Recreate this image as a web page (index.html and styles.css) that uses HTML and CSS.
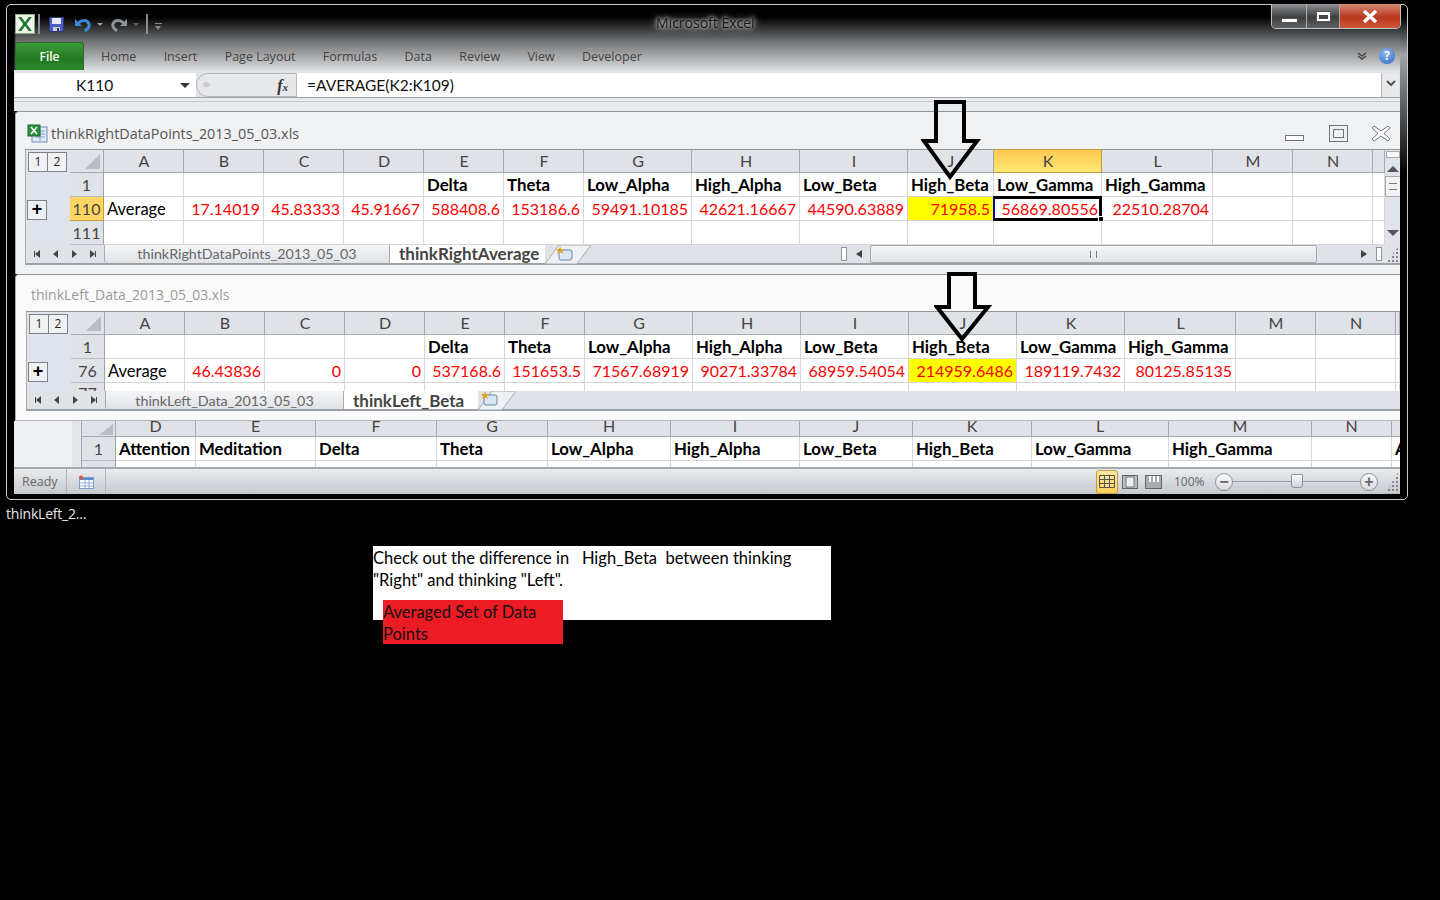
FILE: index.html
```html
<!DOCTYPE html>
<html>
  <head>
    <meta charset="UTF-8">
    <title>Microsoft Excel</title>
    <link rel="stylesheet" href="styles.css">
  </head>
  <body>
  <div class="win">
    <div class="titlebar">
      <div class="qat">
        <svg class="xl" width="20" height="20" viewBox="0 0 20 20"><rect x="0.5" y="0.5" width="19" height="19" fill="#eaf3e6" stroke="#8fa98a"/><path d="M3 3h14v14H3z" fill="#fff"/><path d="M3 3h3.5l3.5 5 3.5-5H17l-5.200 7 5.200 7h-3.500L10 12l-3.500 5H3l5.200-7z" fill="#1f7a2e"/></svg>
        <i class="qsep"></i>
        <svg class="save" width="15" height="15" viewBox="0 0 15 15"><rect x="0.500" y="0.500" width="14" height="14" fill="#4a5fc0" stroke="#2c3a86"/><rect x="3" y="1" width="9" height="6" fill="#e8ecf8"/><rect x="4" y="10" width="7" height="4" fill="#c9d0dc"/><rect x="8" y="11" width="2" height="3" fill="#334"/></svg>
        <svg class="undo" width="16" height="15" viewBox="0 0 16 15"><path d="M3 7c2-4 9-5 11 0 1 3-1 5-4 7" fill="none" stroke="#3f86d8" stroke-width="3"/><path d="M0 2v7h7z" fill="#3f86d8"/></svg>
        <span class="caret"></span>
        <svg class="redo" width="16" height="15" viewBox="0 0 16 15"><path d="M13 7C11 3 4 2 2 7c-1 3 1 5 4 7" fill="none" stroke="#8d9296" stroke-width="3"/><path d="M16 2v7H9z" fill="#8d9296"/></svg>
        <span class="caret dim"></span>
        <i class="qsep"></i>
        <span class="custom"></span>
      </div>
      <div class="apptitle">Microsoft Excel</div>
      <div class="winbtns">
        <span class="wb wmin"><i></i></span>
        <span class="wb wmax"><i></i></span>
        <span class="wb wclose">
          <svg width="16" height="13" viewBox="0 0 16 13"><path d="M2 1l12 11M14 1L2 12" stroke="#fff" stroke-width="3.500"/></svg>
        </span>
      </div>
    </div>

    <div class="ribbon">
      <span class="filetab">File</span>
      <span class="rtab t1">Home</span>
      <span class="rtab">Insert</span>
      <span class="rtab">Page Layout</span>
      <span class="rtab">Formulas</span>
      <span class="rtab">Data</span>
      <span class="rtab">Review</span>
      <span class="rtab">View</span>
      <span class="rtab">Developer</span>
      <span class="spacer"></span>
      <svg class="minim" width="10" height="8" viewBox="0 0 10 8"><path d="M1 1l4 3 4-3M1 4l4 3 4-3" fill="none" stroke="#444" stroke-width="1.500"/></svg>
      <span class="help">?</span>
    </div>

    <div class="formula">
      <div class="namebox">K110<span class="ddarrow"></span></div>
      <div class="fxbox"><span class="knob"></span><em>f<small>x</small></em></div>
      <div class="finput">=AVERAGE(K2:K109)</div>
      <div class="fexpand"><svg width="10" height="8" viewBox="0 0 10 8"><path d="M1 1l4 4 4-4" fill="none" stroke="#555" stroke-width="2"/></svg></div>
    </div>
    <div class="strip"></div>

    <div class="mdi first">
      <div class="mdititle">
        <svg width="21" height="19" viewBox="0 0 21 19"><rect x="5" y="3" width="15" height="15" fill="#dfe8f6" stroke="#6d8fc0"/><path d="M8 7h10M8 10h10M8 13h10M13 4v13" stroke="#88a4cc"/><rect x="1" y="1" width="12" height="11" fill="#2f8f3c" stroke="#1d6a2a"/><path d="M4 3l6 7M10 3l-6 7" stroke="#fff" stroke-width="1.500"/></svg>
        <span class="dname">thinkRightDataPoints_2013_05_03.xls</span>
        <span class="spacer"></span>
        <span class="mbtn mmin"></span>
        <span class="mbtn mmax"><i></i></span>
        <svg class="mclose" width="20" height="17" viewBox="0 0 20 17"><path d="M3 1l7 5 7-5 2 2-6 5.500 6 5.500-2 2-7-5-7 5-2-2 6-5.500L1 3z" fill="#fff" stroke="#6d747c"/></svg>
      </div>
      <div class="sheet">
        <div class="sheetmain">
          <div class="outline">
            <div class="levels"><span>1</span><span>2</span></div>
            <span class="plus">+</span>
          </div>
          <table class="grid g1">
            <colgroup>
              <col class="rh"><col class="c80"><col class="c80"><col class="c80"><col class="c80"><col class="c80"><col class="c80">
              <col class="c108"><col class="c108"><col class="c108"><col class="c86"><col class="c108"><col class="c111"><col class="c80"><col class="c80"><col class="c12">
            </colgroup>
            <tr class="hd">
              <th class="corner"><i></i></th><th>A</th><th>B</th><th>C</th><th>D</th><th>E</th><th>F</th><th>G</th><th>H</th><th>I</th><th>J</th><th class="sel">K</th><th>L</th><th>M</th><th>N</th><th></th>
            </tr>
            <tr>
              <th class="rn">1</th><td></td><td></td><td></td><td></td><td class="b">Delta</td><td class="b">Theta</td><td class="b">Low_Alpha</td><td class="b">High_Alpha</td><td class="b">Low_Beta</td><td class="b">High_Beta</td><td class="b">Low_Gamma</td><td class="b">High_Gamma</td><td></td><td></td><td></td>
            </tr>
            <tr>
              <th class="rn sel">110</th><td class="t">Average</td><td class="n">17.14019</td><td class="n">45.83333</td><td class="n">45.91667</td><td class="n">588408.6</td><td class="n">153186.6</td><td class="n">59491.10185</td><td class="n">42621.16667</td><td class="n">44590.63889</td><td class="n hi">71958.5</td><td class="n active">56869.80556</td><td class="n">22510.28704</td><td></td><td></td><td></td>
            </tr>
            <tr>
              <th class="rn">111</th><td></td><td></td><td></td><td></td><td></td><td></td><td></td><td></td><td></td><td></td><td></td><td></td><td></td><td></td><td></td>
            </tr>
          </table>
          <div class="vscroll">
            <span class="vsplit"></span>
            <span class="up"></span>
            <span class="vthumb"><i></i></span>
            <span class="spacer"></span>
            <span class="down"></span>
          </div>
        </div>
        <div class="tabbar">
          <div class="nav"><b class="first"></b><b class="prev"></b><b class="next"></b><b class="last"></b></div>
          <span class="stab w1">thinkRightDataPoints_2013_05_03</span>
          <span class="stab on w2">thinkRightAverage</span>
          <svg class="newtab" width="46" height="20" viewBox="0 0 46 20"><path d="M0 19L14 0h32L32 19z" fill="#eef0f3" stroke="#a5acb4"/><rect x="14" y="5" width="13" height="10" rx="2" fill="#dbe6f2" stroke="#5f88b0"/><path d="M15 1l1 3 3 0-2 2 1 3-3-2-3 2 1-3-2-2 3 0z" fill="#e6a020"/></svg>
          <span class="spacer"></span>
          <span class="hsplit"></span>
          <span class="left"></span>
          <span class="hthumb"><i></i></span>
          <span class="right"></span>
          <span class="hsplit end"></span>
          <span class="gripdots"></span>
        </div>
      </div>
    </div>

    <div class="mdi second">
      <div class="mdititle tall">
        <span class="dname off">thinkLeft_Data_2013_05_03.xls</span>
      </div>
      <div class="sheet">
        <div class="sheetmain">
          <div class="outline">
            <div class="levels"><span>1</span><span>2</span></div>
            <span class="plus">+</span>
          </div>
          <table class="grid g2">
            <colgroup>
              <col class="rh"><col class="c80"><col class="c80"><col class="c80"><col class="c80"><col class="c80"><col class="c80">
              <col class="c108"><col class="c108"><col class="c108"><col class="c108"><col class="c108"><col class="c111"><col class="c80"><col class="c80"><col class="c5">
            </colgroup>
            <tr class="hd">
              <th class="corner"><i></i></th><th>A</th><th>B</th><th>C</th><th>D</th><th>E</th><th>F</th><th>G</th><th>H</th><th>I</th><th>J</th><th>K</th><th>L</th><th>M</th><th>N</th><th></th>
            </tr>
            <tr>
              <th class="rn">1</th><td></td><td></td><td></td><td></td><td class="b">Delta</td><td class="b">Theta</td><td class="b">Low_Alpha</td><td class="b">High_Alpha</td><td class="b">Low_Beta</td><td class="b">High_Beta</td><td class="b">Low_Gamma</td><td class="b">High_Gamma</td><td></td><td></td><td></td>
            </tr>
            <tr>
              <th class="rn">76</th><td class="t">Average</td><td class="n">46.43836</td><td class="n">0</td><td class="n">0</td><td class="n">537168.6</td><td class="n">151653.5</td><td class="n">71567.68919</td><td class="n">90271.33784</td><td class="n">68959.54054</td><td class="n hi">214959.6486</td><td class="n">189119.7432</td><td class="n">80125.85135</td><td></td><td></td><td></td>
            </tr>
            <tr class="cut">
              <th class="rn">77</th><td></td><td></td><td></td><td></td><td></td><td></td><td></td><td></td><td></td><td></td><td></td><td></td><td></td><td></td><td></td>
            </tr>
          </table>
        </div>
        <div class="tabbar">
          <div class="nav"><b class="first"></b><b class="prev"></b><b class="next"></b><b class="last"></b></div>
          <span class="stab w3">thinkLeft_Data_2013_05_03</span>
          <span class="stab on w4">thinkLeft_Beta</span>
          <svg class="newtab" width="38" height="20" viewBox="0 0 38 20"><path d="M0 19L14 0h24L24 19z" fill="#eef0f3" stroke="#a5acb4"/><rect x="6" y="4" width="13" height="10" rx="2" fill="#dbe6f2" stroke="#5f88b0"/><path d="M7 0l1 3 3 0-2 2 1 3-3-2-3 2 1-3-2-2 3 0z" fill="#e6a020"/></svg>
        </div>
      </div>
    </div>

    <div class="backsheet">
      <div class="backleft"></div>
      <table class="grid g3">
        <colgroup>
          <col class="rh"><col class="b80"><col class="b120"><col class="b121"><col class="b111"><col class="b123"><col class="b129"><col class="b113"><col class="b119"><col class="b137"><col class="b143"><col class="c80"><col class="c9">
        </colgroup>
        <tr class="hd">
          <th class="corner"><i></i></th><th>D</th><th>E</th><th>F</th><th>G</th><th>H</th><th>I</th><th>J</th><th>K</th><th>L</th><th>M</th><th>N</th><th></th>
        </tr>
        <tr>
          <th class="rn">1</th><td class="b">Attention</td><td class="b">Meditation</td><td class="b">Delta</td><td class="b">Theta</td><td class="b">Low_Alpha</td><td class="b">High_Alpha</td><td class="b">Low_Beta</td><td class="b">High_Beta</td><td class="b">Low_Gamma</td><td class="b">High_Gamma</td><td></td><td class="b">A</td>
        </tr>
        <tr class="cut2">
          <th class="rn"></th><td></td><td></td><td></td><td></td><td></td><td></td><td></td><td></td><td></td><td></td><td></td><td></td>
        </tr>
      </table>
    </div>

    <div class="status">
      <span class="ready">Ready</span>
      <svg class="macro" width="16" height="14" viewBox="0 0 16 14"><rect x="1.500" y="2.500" width="14" height="11" fill="#fff" stroke="#7d9cc6"/><rect x="2" y="3" width="13" height="2" fill="#5d8ccc"/><path d="M2 8h13M2 11h13M7 5v8M11 5v8" stroke="#8fb0d8"/><circle cx="3" cy="2.500" r="2" fill="#d9543c"/></svg>
      <span class="statline"></span>
      <span class="spacer"></span>
      <span class="vbtn on">
        <svg width="16" height="13" viewBox="0 0 16 13"><path d="M.5.5h15v12H.5zM.5 4.500h15M.5 8.500h15M5.500.5v12M10.500.5v12" fill="none" stroke="#555"/></svg>
      </span>
      <span class="vbtn">
        <svg width="16" height="14" viewBox="0 0 16 14"><rect x="0.500" y="0.500" width="15" height="13" fill="#b9bec4" stroke="#666"/><rect x="4" y="2" width="8" height="10" fill="#eef0f2" stroke="#777"/></svg>
      </span>
      <span class="vbtn">
        <svg width="17" height="14" viewBox="0 0 17 14"><rect x="0.500" y="0.500" width="16" height="13" fill="#a8adb3" stroke="#666"/><path d="M5 1v6M9 1v6M13 1v6" stroke="#fff" stroke-width="2"/></svg>
      </span>
      <span class="zoompct">100%</span>
      <span class="zbtn">&minus;</span>
      <span class="ztrack"><i></i></span>
      <span class="zbtn">+</span>
      <span class="gripdots st"></span>
    </div>

    <svg class="arrow a1" width="60" height="82" viewBox="0 0 60 82"><path d="M15 2h28v39h13L29 77 3 41h12z" fill="none" stroke="#000" stroke-width="4"/></svg>
    <svg class="arrow a2" width="60" height="72" viewBox="0 0 60 72"><path d="M15 2h26v33h13L28 67 3 35h12z" fill="none" stroke="#000" stroke-width="4"/></svg>
  </div>

  <div class="tasklabel">thinkLeft_2...</div>

  <div class="note">Check out the difference in &nbsp; High_Beta &nbsp;between thinking "Right" and thinking "Left".</div>
  <div class="legend">Averaged Set of Data Points</div>
  </body>
</html>
```

FILE: styles.css
```css
html, body { margin: 0; height: 100%; }
body {
  background-color: #000;
  font-family: "Open Sans", "Noto Sans", sans-serif;
  overflow: hidden;
}
.spacer { flex: 1; }

/* main window, sits on the desktop */
.win {
  position: absolute;
  left: 6px;
  top: 4px;
  width: 1402px;
  height: 496px;
  box-sizing: border-box;
  border: 1px solid #c9cdd1;
  border-radius: 5px;
  padding: 0 7px;
  background-color: #000;
  background-image:
    linear-gradient(#000 12px, #a2a4a6 50px, #000 170px),
    linear-gradient(90deg, #000 7px, transparent 9px),
    linear-gradient(#000 0, #000 12px, #77797b 38px, #dcdee0 66px);
  background-size: 7px 100%, 100% 66px, 100% 66px;
  background-position: right top, left top, left top;
  background-repeat: no-repeat;
}
.titlebar {
  height: 37px;
  display: flex;
  position: relative;
}
.qat { display: flex; align-items: center; padding: 2px 0 0 1px; height: 34px; }
.xl { margin-right: 3px; }
.qsep { width: 2px; height: 20px; background: #8b8e91; margin-right: 9px; }
.save { margin-right: 11px; }
.undo { margin-right: 6px; }
.redo { margin: 0 6px 0 8px; }
.caret { width: 0; height: 0; border: 3px solid transparent; border-top: 3px solid #9a9c9e; margin-top: 4px; }
.caret.dim { margin-right: 7px; border-top-color: #5d5f61; }
.custom { width: 7px; height: 6px; border-top: 1px solid #888; margin-left: -2px; margin-top: 5px; position: relative; }
.custom::after { content: ""; position: absolute; left: 0; top: 2px; border: 3px solid transparent; border-top: 4px solid #888; }
.apptitle {
  position: absolute;
  left: 642px;
  top: 9px;
  font-size: 14px;
  line-height: 18px;
  color: #111;
  text-shadow: 0 0 8px #ddd, 0 0 5px #bbb, 0 0 3px #aaa;
}
.winbtns {
  position: absolute;
  right: -1px;
  top: -1px;
  width: 128px;
  height: 24px;
  display: flex;
  border: 1px solid #bfc3c7;
  border-top: none;
  border-radius: 0 0 5px 5px;
  overflow: hidden;
}
.wb { display: flex; align-items: center; justify-content: center; border-right: 1px solid #aaa; }
.wmin { width: 34px; background: linear-gradient(#8f9295, #3c3e40 55%, #606264); }
.wmin i { width: 15px; height: 3px; background: #fff; border: 1px solid #555; margin-top: 8px; }
.wmax { width: 32px; background: linear-gradient(#8f9295, #3c3e40 55%, #606264); }
.wmax i { width: 9px; height: 4px; border: 2px solid #fff; border-top-width: 3px; background: #444; outline: 1px solid #555; }
.wclose { flex: 1; border: none; background: linear-gradient(#d98a78, #b8371c 55%, #d0583a); }

/* ribbon */
.ribbon {
  height: 28px;
  display: flex;
  align-items: center;
  font-size: 12.500px;
  color: #444;
  position: relative;
}
.filetab {
  width: 69px;
  height: 28px;
  margin-left: 1px;
  box-sizing: border-box;
  padding-top: 5px;
  text-align: center;
  color: #fff;
  font-size: 12px;
  font-weight: 600;
  border: 1px solid #2d6b2a;
  border-bottom: none;
  border-radius: 3px 3px 0 0;
  background: linear-gradient(#3f9a3c, #1f7a1f 60%, #2d8a2d);
}
.rtab { margin: 1px 0 0 27.300px; }
.rtab.t1 { margin-left: 17px; }
.minim { margin-right: 12px; }
.help {
  width: 16px;
  height: 16px;
  margin-right: 5px;
  border-radius: 50%;
  background: radial-gradient(circle at 40% 30%, #8ab4ec, #2f68c4);
  color: #fff;
  font-size: 12px;
  font-weight: 700;
  line-height: 16px;
  text-align: center;
}

/* formula bar */
.formula {
  height: 28px;
  box-sizing: border-box;
  padding: 3px 1px 0 1px;
  display: flex;
  background: #dfe2e6;
  border-bottom: 1px solid #9ea3a9;
  font-family: Lato, sans-serif;
  font-size: 15.500px;
  color: #111;
}
.namebox {
  width: 181px;
  background: #fff;
  line-height: 24px;
  padding-left: 61px;
  box-sizing: border-box;
  position: relative;
}
.ddarrow { position: absolute; right: 6px; top: 10px; border: 5px solid transparent; border-top: 5px solid #333; }
.fxbox {
  width: 101px;
  box-sizing: border-box;
  border-radius: 12px 0 0 12px;
  border: 1px solid #b5b9be;
  background: #e6e8eb;
  position: relative;
}
.knob { position: absolute; left: 6px; top: 8px; width: 7px; height: 5px; border-radius: 50%; background: #c9ccd0; }
.fxbox em {
  position: absolute;
  right: 8px;
  top: 0;
  font: italic bold 16px/24px "Liberation Serif", serif;
  color: #333;
}
.fxbox small { font-size: 11px; }
.finput { flex: 1; background: #fff; line-height: 24px; padding-left: 10px; }
.fexpand {
  width: 18px;
  box-sizing: border-box;
  border-left: 1px solid #b5b9be;
  background: #e6e8eb;
  text-align: center;
}
.strip {
  height: 13px;
  box-sizing: border-box;
  background: #e9ecef;
  position: relative;
}
.strip::before { content: ""; position: absolute; left: 0; right: 0; top: 3px; height: 1px; background: #c4c8cc; }

/* workbook windows */
.mdi {
  margin-left: 1px;
  background: #eff1f3;
  border-top: 1px solid #8f959b;
  border-left: 1px solid #a7acb2;
  border-radius: 4px 0 0 0;
  box-sizing: border-box;
}
.mdi.first { height: 163px; }
.mdi.second { height: 147px; background: #fafafa; border-bottom: 1px solid #b0b4b8; }
.mdititle {
  height: 37px;
  display: flex;
  align-items: center;
  padding: 6px 0 0 11px;
  box-sizing: border-box;
}
.mdititle.tall { height: 36px; padding: 2px 0 0 15px; }
.dname { font-size: 14.400px; color: #555; margin-left: 3px; }
.dname.off { color: #9a9a9a; margin: 0; font-size: 14px; }
.mbtn { display: block; border: 1px solid #6d747c; box-sizing: border-box; background: #fff; }
.mmin { width: 19px; height: 6px; margin: 8px 25px 0 0; }
.mmax { width: 19px; height: 17px; margin-right: 23px; display: flex; align-items: center; justify-content: center; background: #eef0f2; }
.mmax i { display: block; width: 9px; height: 7px; border: 1px solid #6d747c; }
.mclose { margin-right: 9px; }

.sheet { margin-left: 9px; background: #fff; }
.second .sheet { margin-left: 10px; }
.sheetmain { display: flex; height: 96px; overflow: hidden; }
.second .sheetmain { height: 80px; }
.outline {
  width: 45px;
  flex: none;
  box-sizing: border-box;
  background: #dfe3ec;
  border-left: 1px solid #a7acb2;
  border-top: 1px solid #8f959b;
  position: relative;
}
.levels { display: flex; margin: 2px 0 0 2px; }
.levels span {
  width: 20px;
  height: 20px;
  box-sizing: border-box;
  border: 1px solid #7d8287;
  background: #f0f1f3;
  font-size: 12px;
  line-height: 18px;
  text-align: center;
  color: #222;
}
.levels span + span { margin-left: -1px; }
.plus {
  position: absolute;
  left: 1px;
  top: 50px;
  width: 20px;
  height: 20px;
  box-sizing: border-box;
  border: 1px solid #7d8287;
  background: #eef0f4;
  font: bold 18px/17px "Liberation Sans", sans-serif;
  text-align: center;
  color: #000;
}

.grid {
  table-layout: fixed;
  border-collapse: separate;
  border-spacing: 0;
  font-family: Lato, sans-serif;
  font-size: 16px;
  color: #000;
  background: #fff;
  flex: none;
}
.grid th, .grid td {
  box-sizing: border-box;
  height: 24px;
  padding: 0 3px;
  overflow: hidden;
  white-space: nowrap;
  font-weight: 400;
  border-right: 1px solid #d6d6d6;
  border-bottom: 1px solid #d6d6d6;
}
.g1 { width: 1315px; }
.g2 { width: 1325px; }
.g3 { width: 1309px; }
col.rh { width: 34px; }
col.c80 { width: 80px; }
col.c108 { width: 108px; }
col.c86 { width: 86px; }
col.c111 { width: 111px; }
col.c12 { width: 12px; }
col.c5 { width: 4px; }
col.c9 { width: 9px; }
col.b80 { width: 80px; }
col.b120 { width: 120px; }
col.b121 { width: 121px; }
col.b111 { width: 111px; }
col.b123 { width: 123px; }
col.b129 { width: 129px; }
col.b113 { width: 113px; }
col.b119 { width: 119px; }
col.b137 { width: 137px; }
col.b143 { width: 143px; }
.grid .hd th {
  background: #dfe2e7;
  color: #444;
  text-align: center;
  padding: 0 2px 2px 3px;
  border-top: 1px solid #8f959b;
  border-right: 1px solid #a5aab0;
  border-bottom: 1px solid #a5aab0;
}
.grid .rn {
  background: #dfe2e7;
  color: #444;
  text-align: center;
  padding: 0;
  border-right: 1px solid #9ea3a9;
  border-bottom: 1px solid #b9bdc2;
}
.grid .hd .corner { position: relative; padding: 0; }
.corner i {
  position: absolute;
  right: 3px;
  bottom: 3px;
  border-left: 15px solid transparent;
  border-bottom: 15px solid #b9bdc2;
}
.grid .hd th.sel {
  background: linear-gradient(#fcc94f, #ffe673);
  border-color: #c29a40;
}
.grid .rn.sel {
  background: #ffd662;
  border-color: #c29a40;
  border-right: 1px solid #c29a40;
}
.grid td.t { font-size: 16.500px; }
.grid td.b { font-weight: 700; font-size: 16.800px; }
.grid td.n { color: #ff0000; text-align: right; }
.grid td.hi { background: #ffff00; }
.grid td.active {
  position: relative;
  overflow: visible;
}
.grid td.active::before {
  content: "";
  position: absolute;
  left: -1px;
  top: -1px;
  right: -1px;
  bottom: -1px;
  border: 3px solid #000;
  border-left: 2px solid #0000c8;
}
.grid td.active::after {
  content: "";
  position: absolute;
  right: -3px;
  bottom: -2px;
  width: 6px;
  height: 6px;
  background: #000;
  border: 1px solid #fff;
  box-sizing: border-box;
}

.vscroll {
  width: 16px;
  flex: none;
  box-sizing: border-box;
  background: #dfe3ec;
  border-top: 1px solid #8f959b;
  display: flex;
  flex-direction: column;
  align-items: center;
}
.vsplit { flex: none; width: 14px; height: 7px; margin-top: 1px; border: 1px solid #a5aab0; background: #f5f6f7; box-sizing: border-box; }
.up { flex: none; margin-top: 8px; border: 6px solid transparent; border-top: none; border-bottom: 6px solid #555; }
.vthumb {
  flex: none;
  width: 16px;
  height: 21px;
  margin-top: 4px;
  box-sizing: border-box;
  border: 1px solid #a5aab0;
  background: #f1f2f4;
  display: flex;
  align-items: center;
  justify-content: center;
}
.vthumb i { width: 8px; height: 5px; border-top: 1px solid #777; border-bottom: 1px solid #777; }
.down { flex: none; margin-bottom: 9px; border: 6px solid transparent; border-bottom: none; border-top: 6px solid #555; }

.tabbar {
  height: 20px;
  box-sizing: border-box;
  display: flex;
  align-items: stretch;
  background: #dfe3e8;
  border-left: 1px solid #a7acb2;
  border-bottom: 2px solid #9aa0a6;
  font-family: Lato, sans-serif;
  font-size: 14.300px;
}
.nav {
  width: 78px;
  flex: none;
  display: flex;
  align-items: center;
  justify-content: space-between;
  padding: 0 9px;
  box-sizing: border-box;
}
.nav b { display: block; width: 0; height: 0; border: 4px solid transparent; }
.nav .first, .nav .prev { border-left: none; border-right: 5px solid #444; }
.nav .next, .nav .last { border-right: none; border-left: 5px solid #444; }
.nav .first { box-shadow: -2px 0 0 -1px #444; }
.nav .last { box-shadow: 2px 0 0 -1px #444; }
.stab {
  box-sizing: border-box;
  text-align: center;
  color: #666;
  line-height: 18px;
  background: linear-gradient(#f4f5f7, #dfe2e6);
  border-right: 1px solid #a5acb4;
  border-left: 1px solid #a5acb4;
  border-radius: 0 0 0 3px;
}
.stab.on {
  background: #fff;
  color: #444;
  font-size: 17px;
  font-weight: 700;
  text-align: left;
  padding-left: 9px;
  border: none;
  border-radius: 0;
}
.second .stab { line-height: 20px; }
.w1 { width: 286px; }
.w2 { width: 155px; }
.w3 { width: 239px; }
.w4 { width: 134px; }
.hsplit { width: 6px; margin: 2px 0; background: #fff; border: 1px solid #8f959b; box-sizing: border-box; }
.left { align-self: center; margin: 0 8px 0 9px; border: 4px solid transparent; border-left: none; border-right: 6px solid #444; }
.hthumb {
  width: 447px;
  box-sizing: border-box;
  border: 1px solid #a5aab0;
  border-radius: 2px;
  background: linear-gradient(#f4f5f7, #dfe2e6);
  display: flex;
  align-items: center;
  justify-content: center;
}
.hthumb i { width: 5px; height: 7px; border-left: 1px solid #777; border-right: 1px solid #777; }
.right { align-self: center; margin: 0 9px 0 44px; border: 4px solid transparent; border-right: none; border-left: 6px solid #444; }
.hsplit.end { margin-right: 3px; }
.gripdots {
  width: 15px;
  background-image: radial-gradient(#7f848a 1px, transparent 1px);
  background-size: 4px 4px;
  background-position: 2px 2px;
  clip-path: polygon(100% 0, 100% 100%, 0 100%);
}

.backsheet { height: 46px; display: flex; overflow: hidden; background: #eef0f3; }
.backleft { width: 66px; flex: none; margin-left: 1px; border-right: 1px solid #a5aab0; box-shadow: inset -9px 0 0 #e3e6ea; }
.backsheet .grid .hd th {
  height: 16px;
  line-height: 9px;
  vertical-align: top;
  border-top: none;
  padding: 0;
}
.grid .cut th, .grid .cut td { height: 8px; line-height: 24px; vertical-align: top; border-bottom: none; }
.second .grid .cut th { line-height: 19px; }
.grid .cut2 th, .grid .cut2 td { height: 6px; border-bottom: none; }
.g3 th.corner i { right: 2px; bottom: 1px; border-left-width: 14px; border-bottom-width: 11px; }

/* status bar */
.status {
  height: 27px;
  box-sizing: border-box;
  display: flex;
  align-items: center;
  border-top: 2px solid #a5aab0;
  background: linear-gradient(#e9ebee, #c5c9ce);
  font-size: 12.500px;
  color: #666;
  position: relative;
}
.ready { width: 53px; padding-left: 8px; box-sizing: border-box; border-right: 1px solid #b0b4b9; height: 25px; line-height: 25px; }
.macro { margin-left: 11px; }
.statline { width: 1px; height: 25px; margin-left: 11px; background: #b0b4b9; }
.vbtn { width: 22px; height: 24px; display: flex; align-items: center; justify-content: center; margin-right: 1px; }
.vbtn.on {
  box-sizing: border-box;
  border: 1px solid #c89b3c;
  border-radius: 3px;
  background: linear-gradient(#ffe9a3, #ffcf5c);
}
.zoompct { margin-left: 9px; width: 41px; font-size: 12px; }
.zbtn {
  width: 18px;
  height: 18px;
  box-sizing: border-box;
  border: 1px solid #8f959b;
  border-radius: 50%;
  background: linear-gradient(#fafbfc, #d8dbdf);
  font: bold 16px/15px "Liberation Sans", sans-serif;
  color: #666;
  text-align: center;
}
.ztrack { width: 127px; height: 1px; background: #9a9ea3; position: relative; }
.ztrack i {
  position: absolute;
  left: 58px;
  top: -7px;
  width: 10px;
  height: 12px;
  background: linear-gradient(#fbfbfc, #cfd3d8);
  border: 1px solid #8f959b;
  border-radius: 1px 1px 3px 3px;
}
.gripdots.st { height: 24px; margin-left: 7px; width: 15px; }

/* hand-drawn arrows lying over the sheets */
.arrow { position: absolute; }
.a1 { left: 914px; top: 95px; }
.a2 { left: 927px; top: 267px; }

/* things on the desktop below the window */
.tasklabel {
  position: absolute;
  left: 6px;
  top: 505px;
  font-size: 14px;
  line-height: 18px;
  color: #e6e6e6;
  letter-spacing: -0.2px;
}
.note {
  position: absolute;
  left: 373px;
  top: 546px;
  width: 458px;
  height: 74px;
  box-sizing: border-box;
  padding: 1px 30px 0 0;
  background: #fff;
  color: #000;
  font-family: Lato, sans-serif;
  font-size: 16.500px;
  line-height: 22px;
}
.legend {
  position: absolute;
  left: 383px;
  top: 600px;
  width: 180px;
  height: 44px;
  padding: 1px 20px 0 0;
  box-sizing: border-box;
  background: #ed1c24;
  color: #111;
  font-family: Lato, sans-serif;
  font-size: 16.500px;
  line-height: 22px;
}
```
